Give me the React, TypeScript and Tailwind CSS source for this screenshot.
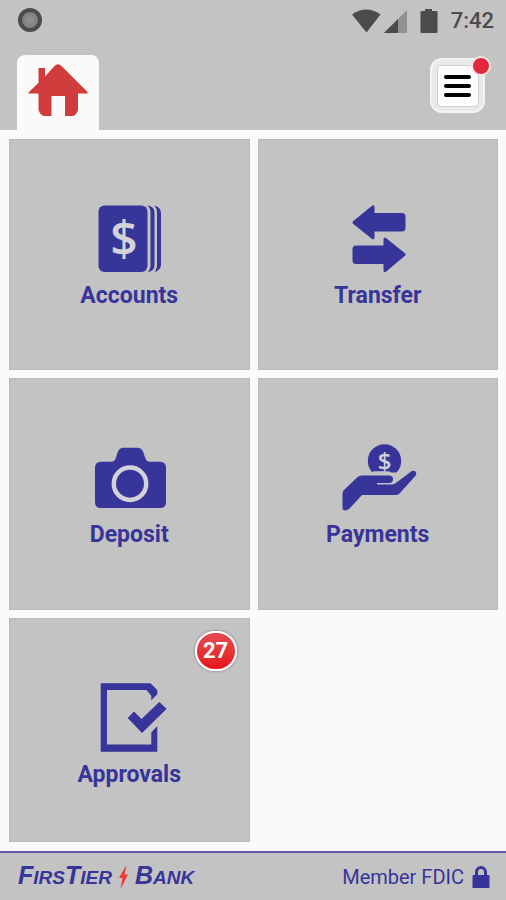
import type { ReactNode } from "react";

function HomeIcon() {
  return (
    <svg viewBox="0 0 60 52" className="h-[52px] w-[60px]" fill="#d03c3c" aria-hidden="true">
      <path d="M.5 28.500 10.500 18.800V4H17v8.500L26.500 2Q30-1.500 33.500 2L59.500 28v1.500H50V46q-1.500 5-5 6h-8V32H23.500v20H16q-4-1-5.500-6V29.500H.5Z" />
    </svg>
  );
}

function StatusIcons() {
  return (
    <svg viewBox="0 0 88 26" className="h-[26px] w-[88px]" fill="#4b4b4b" aria-hidden="true">
      <path d="M1 6.500Q15-3.500 29.500 6.500L15.500 24.500Z" />
      <path d="M56 2v23H33Z" fill="#929292" />
      <path d="M47 11v14H33Z" />
      <path d="M70.500 3h3.500V1h7v2h4.500q1 0 1 1v20q0 1-1 1h-15q-1 0-1-1V4q0-1 1-1Z" />
    </svg>
  );
}

function AccountsIcon() {
  return (
    <>
      <rect x="9.500" y="1.500" width="49" height="66.500" rx="6" />
      <path d="M58.500 1.500Q65.500 2 65.500 9v51.500Q65.500 67.500 58.500 68q3-2.500 3-7V8.500q0-4.500-3-7Z" />
      <path d="M65 1.500Q72 3 72 9v51.500Q72 66.500 65 68q3-2.500 3-7V8.500q0-4.500-3-7Z" />
      <text
        x="35"
        y="52"
        textAnchor="middle"
        className="fill-[#d2d2d8] font-['Open_Sans',sans-serif] text-[48px] font-semibold"
      >
        $
      </text>
    </>
  );
}

function TransferIcon() {
  return (
    <g stroke="currentColor" strokeWidth="3" strokeLinejoin="round">
      <path d="M16 18.500 35 2.800V10.500H64q2 0 2 2V24q0 2-2 2H35v7.800Z" />
      <path d="M66 50.500 47 35.200V43H18q-2 0-2 2v11.500q0 2 2 2h29v8Z" />
    </g>
  );
}

function DepositIcon() {
  return (
    <>
      <path d="M12 18.700h10q3.500 0 4.500-3L29 8.500Q30.500 4.700 34.500 4.700h14q4 0 5.500 3.800l2.500 7.200q1 3 4.500 3h10q6 0 6 6V59q0 6-6 6H12q-6 0-6-6V24.700q0-6 6-6Z" />
      <circle cx="41" cy="40.700" r="16.200" fill="none" stroke="#d2d2d8" strokeWidth="4.500" />
    </>
  );
}

function PaymentsIcon() {
  return (
    <>
      <path d="M34.500 29.500a16.700 16.700 0 1 1 24 0h-5q-1.500-1.200-5-1.200H36q-1 0-1.500 1.200Z" />
      <text
        x="46.500"
        y="27"
        textAnchor="middle"
        className="fill-[#d2d2d8] font-['Open_Sans',sans-serif] text-[24px] font-semibold"
      >
        $
      </text>
      <path d="M4.500 50.500Q4.500 48.500 6 47L19 34.600Q21 32.600 24 32.600h27q4 0 4 3.500 0 4-4 4H39v1.500h14.500q3.500 0 5-2L72.500 29q2.500-2 5-.5 1.500 2 0 4.200L62 50q-1.500 2-4 2H24L12.500 64.500q-3.500 4-7 2.500-1-.5-1-2Z" />
    </>
  );
}

function ApprovalsIcon() {
  return (
    <>
      <path d="M11.700.3H61.500L68.300 7v4.300l-6 6v-4.500L57.500 7H18v54.500h44.300V49.300l6-6v25.400H11.700Z" />
      <path d="m38.700 34.900 6.300-6.300 7.500 7.400L70.300 19l7.400 6.700L53 50Z" />
    </>
  );
}

const tiles: { label: string; icon: ReactNode; badge?: number }[] = [
  { label: "Accounts", icon: <AccountsIcon /> },
  { label: "Transfer", icon: <TransferIcon /> },
  { label: "Deposit", icon: <DepositIcon /> },
  { label: "Payments", icon: <PaymentsIcon /> },
  { label: "Approvals", icon: <ApprovalsIcon />, badge: 27 },
];

export default function App() {
  return (
    <div className="flex min-h-screen flex-col bg-[#fafafa] font-[Roboto,sans-serif] text-[#37349a]">
      <header className="bg-[#c3c3c3]">
        {/* Status bar */}
        <div className="flex h-10 items-center justify-between pr-3 pl-[18px]">
          <span className="size-6 rounded-full border-4 border-[#4b4b4b] bg-[radial-gradient(circle,#919191,#777777)]" />
          <div className="flex items-center gap-3 pt-0.5 text-[#4b4b4b]">
            <StatusIcons />
            <span className="text-[22px] leading-6 font-medium">7:42</span>
          </div>
        </div>

        {/* Tab and menu */}
        <div className="flex h-[90px] items-end justify-between pr-[21px] pl-[17px]">
          <button
            aria-label="Home"
            className="flex h-[75px] w-[82px] justify-center rounded-t-lg bg-[#fafafa] pt-[9px]"
          >
            <HomeIcon />
          </button>
          <button
            aria-label="Menu"
            className="relative mb-[17px] flex size-[55px] items-center justify-center rounded-xl border-2 border-[#f4f4f4] bg-[#e9e9e9]"
          >
            <span className="flex size-[42px] flex-col items-center justify-center gap-[5px] rounded-sm border border-[#cfcfcf] bg-[#fcfcfc]">
              <span className="h-1 w-[27px] rounded-full bg-black" />
              <span className="h-1 w-[27px] rounded-full bg-black" />
              <span className="h-1 w-[27px] rounded-full bg-black" />
            </span>
            <span className="absolute -top-1 -right-2 size-5 rounded-full border-2 border-[#f4e4e4] bg-[#e2283c]" />
          </button>
        </div>
      </header>

      {/* Tiles */}
      <main className="grid flex-1 grid-cols-2 grid-rows-[232fr_232fr_225fr] gap-2 py-[9px] pr-2 pl-[9px]">
        {tiles.map((tile) => (
          <button
            key={tile.label}
            className="relative flex flex-col items-center justify-start border border-[#b9b9b9] bg-[#c3c3c3] pt-16"
          >
            <svg viewBox="0 0 80 72" className="h-[72px] w-20" fill="currentColor" aria-hidden="true">
              {tile.icon}
            </svg>
            <span className="mt-1.5 text-[23px] leading-7 font-bold">{tile.label}</span>
            {tile.badge && (
              <span className="absolute top-3 right-3 flex h-10 w-[42px] items-center justify-center rounded-full border-2 border-white bg-linear-to-b from-[#e24a50] to-[#e60f18] text-[22px] leading-6 font-bold text-white shadow-[0_0_3px_#777777]">
                {tile.badge}
              </span>
            )}
          </button>
        ))}
      </main>

      <footer className="flex h-[49px] items-center justify-between border-t-2 border-[#5b58a6] bg-[#c3c3c3] pr-4 pl-[18px]">
        <div className="flex items-center gap-[7px] font-['Liberation_Sans',sans-serif] text-[19px] leading-7 font-bold italic">
          <span>
            <span className="text-[25px]">F</span>IRS<span className="text-[25px]">T</span>IER
          </span>
          <svg viewBox="0 0 9 24" className="h-6 w-[9px]" fill="#ed3737" aria-hidden="true">
            <path d="M7.500 0 0 13h3.500L1.500 24 9 9.500H5.500Z" />
          </svg>
          <span>
            <span className="text-[25px]">B</span>ANK
          </span>
        </div>
        <div className="flex items-center gap-2">
          <span className="text-[20px] leading-7">Member FDIC</span>
          <svg viewBox="0 0 18 23" className="h-[23px] w-[18px]" fill="currentColor" aria-hidden="true">
            <path d="M1.500 10H3V7a6 6 0 0 1 12 0v3h1.500q1 0 1 1v11q0 1-1 1h-15q-1 0-1-1V11q0-1 1-1ZM6 10h6V7a3 3 0 0 0-6 0Z" />
          </svg>
        </div>
      </footer>
    </div>
  );
}
